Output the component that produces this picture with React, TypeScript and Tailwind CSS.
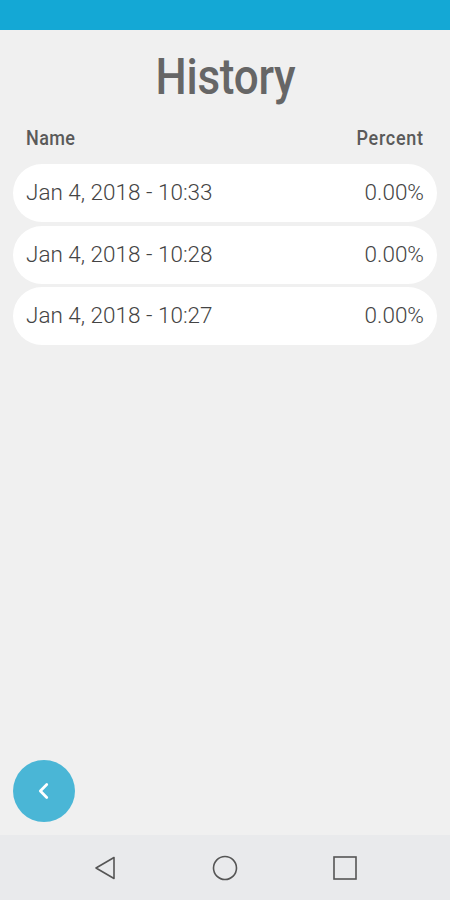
import React from 'react';

const rows = [
  { name: 'Jan 4, 2018 - 10:33', percent: '0.00%' },
  { name: 'Jan 4, 2018 - 10:28', percent: '0.00%' },
  { name: 'Jan 4, 2018 - 10:27', percent: '0.00%' },
];

export default function App() {
  return (
    <div className="w-[450px] h-[900px] flex flex-col bg-[#f0f0f0] font-['Roboto',sans-serif]">
      <div className="h-[30px] bg-[#14a8d5] shrink-0" />

      <div className="flex-1 flex flex-col px-[13px]">
        <div className="flex justify-center mt-[22px]">
          <h1 className="inline-block text-[50px] leading-none font-medium text-[#666] scale-x-[0.88] tracking-[-0.3px]">
            History
          </h1>
        </div>

        <div className="flex justify-between px-[13px] mt-[26px] text-[20px] leading-none font-medium text-[#5a5a5a]">
          <span className="inline-block origin-left scale-x-[0.9] tracking-[0.4px]">Name</span>
          <span className="inline-block origin-right scale-x-[0.9] tracking-[0.8px]">Percent</span>
        </div>

        <div className="flex flex-col gap-[3.5px] mt-[16px]">
          {rows.map((row, i) => (
            <div
              key={i}
              className="h-[58px] bg-white rounded-full flex items-center justify-between px-[13px] text-[22.5px] font-light text-[#444]"
            >
              <span>{row.name}</span>
              <span>{row.percent}</span>
            </div>
          ))}
        </div>

        <div className="mt-auto mb-[13px]">
          <button className="w-[62px] h-[62px] rounded-full bg-[#4ab6d6] flex items-center justify-center">
            <svg width="22" height="22" viewBox="0 0 24 24" fill="none" stroke="white" strokeWidth="3" strokeLinecap="round" strokeLinejoin="round">
              <path d="M15 5l-7 7 7 7" />
            </svg>
          </button>
        </div>
      </div>

      <div className="h-[65px] shrink-0 bg-[#e9eaec] flex items-center justify-center">
        <div className="flex items-center gap-[95px]">
          <svg width="24" height="26" viewBox="0 0 24 26" fill="none" stroke="#555" strokeWidth="1.6" strokeLinejoin="round">
            <path d="M21 2.5v21L3 13z" />
          </svg>
          <svg width="26" height="26" viewBox="0 0 26 26" fill="none" stroke="#555" strokeWidth="1.6">
            <circle cx="13" cy="13" r="11.5" />
          </svg>
          <svg width="24" height="24" viewBox="0 0 24 24" fill="none" stroke="#555" strokeWidth="1.6">
            <rect x="1" y="1" width="22" height="22" />
          </svg>
        </div>
      </div>
    </div>
  );
}
